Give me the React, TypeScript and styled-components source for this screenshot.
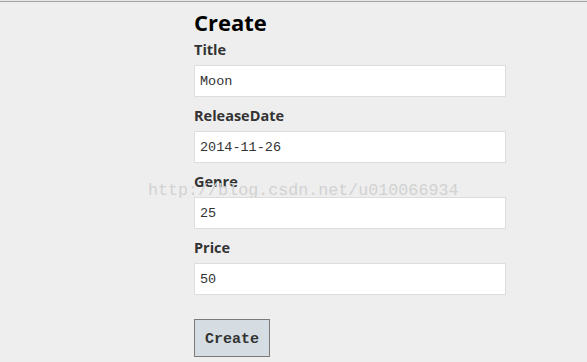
import React from "react";
import styled, { createGlobalStyle } from "styled-components";

const Global = createGlobalStyle`
  html, body { margin: 0; padding: 0; background: #eeeeee; }
  body { font-family: "Open Sans", "Liberation Sans", sans-serif; }
`;

const Page = styled.div`
  position: relative;
  width: 587px;
  height: 362px;
  background: #eeeeee;
  overflow: hidden;
  border-top: 1px solid #e6e6e6;
`;

const TopRule = styled.div`
  height: 1px;
  background: #a3a3a3;
`;

const Content = styled.div`
  padding-left: 194px;
  display: flex;
  flex-direction: column;
`;

const Heading = styled.h2`
  margin: 6px 0 0;
  font-size: 22px;
  line-height: 28px;
  font-weight: 700;
  color: #000;
`;

const Form = styled.form`
  display: flex;
  flex-direction: column;
  margin-top: 2px;
`;

const Field = styled.div`
  display: flex;
  flex-direction: column;
`;

const Label = styled.label`
  font-size: 14.5px;
  line-height: 24px;
  height: 24px;
  font-weight: 700;
  color: #333333;
  margin-bottom: 3px;
`;

const Input = styled.input`
  position: relative;
  z-index: 1;
  box-sizing: border-box;
  width: 312px;
  height: 32px;
  margin: 0 0 7px;
  padding: 1px 5px 0;
  border: 1px solid #dddddd;
  background: #ffffff;
  font-family: "Liberation Mono", "DejaVu Sans Mono", monospace;
  font-size: 13.5px;
  color: #333333;
  outline: none;
`;

const Button = styled.button`
  box-sizing: border-box;
  align-self: flex-start;
  margin-top: 17px;
  width: 76px;
  height: 38px;
  border: 1px solid #7a7a7a;
  background: #d5dde2;
  font-family: "Liberation Mono", "DejaVu Sans Mono", monospace;
  font-size: 15px;
  font-weight: 700;
  color: #333333;
  padding: 2px 0 0;
`;

const Watermark = styled.div`
  position: absolute;
  left: 148px;
  top: 180px;
  font-family: "Liberation Mono", "DejaVu Sans Mono", monospace;
  font-size: 16.7px;
  line-height: 20px;
  color: #d2d2d2;
  pointer-events: none;
  white-space: nowrap;
`;

const fields = [
  { label: "Title", value: "Moon" },
  { label: "ReleaseDate", value: "2014-11-26" },
  { label: "Genre", value: "25" },
  { label: "Price", value: "50" },
];

export default function App() {
  return (
    <>
      <Global />
      <Page>
        <TopRule />
        <Watermark>http://blog.csdn.net/u010066934</Watermark>
        <Content>
          <Heading>Create</Heading>
          <Form onSubmit={(e) => e.preventDefault()}>
            {fields.map((f) => (
              <Field key={f.label}>
                <Label>{f.label}</Label>
                <Input defaultValue={f.value} />
              </Field>
            ))}
            <Button type="submit">Create</Button>
          </Form>
        </Content>
      </Page>
    </>
  );
}
